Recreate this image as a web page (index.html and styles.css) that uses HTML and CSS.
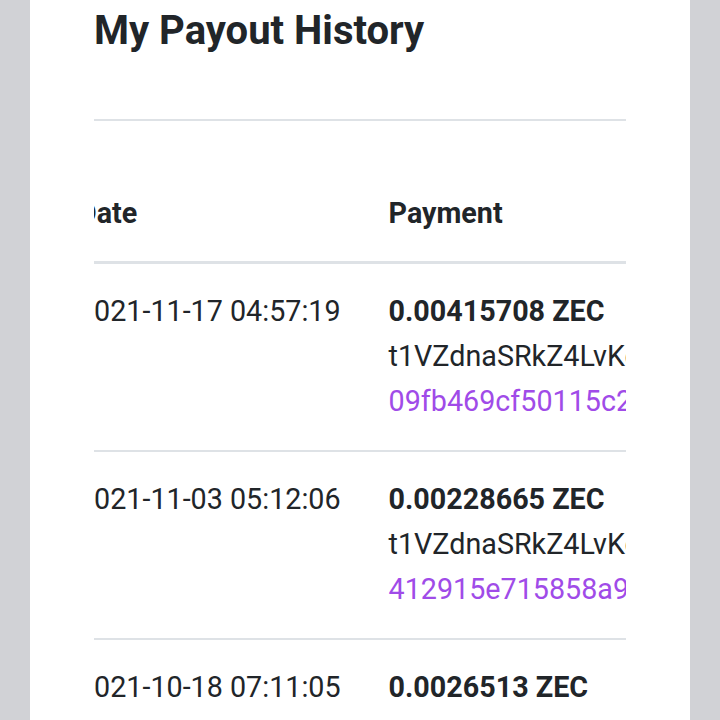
FILE: index.html
```html
<!DOCTYPE html>
<html>
<head>
    <title>My Payout History</title>
    <meta charset="UTF-8">
    <meta name="viewport" content="width=device-width, initial-scale=1.0">
    <link rel="stylesheet" href="styles.css">
</head>
<body>
    <div class="card">
        <h1 class="card-title">My Payout History</h1>
        <div class="table-scroll" id="payoutScroll">
            <table class="payout-table">
                <thead>
                    <tr>
                        <th>Date</th>
                        <th>Payment</th>
                    </tr>
                </thead>
                <tbody>
                    <tr>
                        <td>2021-11-17 04:57:19</td>
                        <td>
                            <div class="amount">0.00415708 ZEC</div>
                            <div class="address">t1VZdnaSRkZ4LvKqnH8bC2xJ7mPf3wD9eTu</div>
                            <a class="tx" href="#">09fb469cf50115c2a8e1d47b93c6f02e5b8a71d4c9e03f6a2b5d8c1e4f7a90b3</a>
                        </td>
                    </tr>
                    <tr>
                        <td>2021-11-03 05:12:06</td>
                        <td>
                            <div class="amount">0.00228665 ZEC</div>
                            <div class="address">t1VZdnaSRkZ4LvKqnH8bC2xJ7mPf3wD9eTu</div>
                            <a class="tx" href="#">412915e715858a93c0d4e7f1b2a6c8d9e3f5a7b1c4d6e8f0a2b3c5d7e9f1a3b5</a>
                        </td>
                    </tr>
                    <tr>
                        <td>2021-10-18 07:11:05</td>
                        <td>
                            <div class="amount">0.0026513 ZEC</div>
                            <div class="address">t1VZdnaSRkZ4LvKqnH8bC2xJ7mPf3wD9eTu</div>
                            <a class="tx" href="#">7c3e1a9b5d2f8e4c6a0b3d5f7e9c1a2b4d6f8e0c3a5b7d9f1e2c4a6b8d0f2e4a</a>
                        </td>
                    </tr>
                </tbody>
            </table>
        </div>
    </div>

    <script>
        document.getElementById('payoutScroll').scrollLeft = 40;
    </script>
</body>
</html>
```

FILE: styles.css
```css
body {
    margin: 0;
    padding: 0;
    background-color: #d1d2d6;
    font-family: 'Roboto', 'Liberation Sans', sans-serif;
    color: #212529;
}

.card {
    background-color: white;
    margin: 0 30px;
    padding: 6px 64px 40px;
    min-height: 720px;
    box-sizing: border-box;
}

.card-title {
    margin: 0;
    font-size: 40px;
    line-height: 49px;
    font-weight: 700;
    padding-bottom: 64px;
    border-bottom: 2px solid #dee2e6;
}

.table-scroll {
    margin-top: 45px;
    overflow-x: auto;
    scrollbar-width: none;
}

.table-scroll::-webkit-scrollbar {
    display: none;
}

.payout-table {
    border-collapse: collapse;
    font-size: 28.7px;
    line-height: 45px;
    white-space: nowrap;
}

.payout-table th,
.payout-table td {
    padding: 25px 24px;
    text-align: left;
    vertical-align: top;
}

.payout-table thead th {
    font-weight: 700;
    border-bottom: 3px solid #dee2e6;
}

.payout-table tbody td {
    padding-bottom: 26px;
    border-bottom: 2px solid #dee2e6;
}

.amount {
    font-weight: 700;
}

.tx {
    display: block;
    color: #a04be8;
    text-decoration: none;
}
```
